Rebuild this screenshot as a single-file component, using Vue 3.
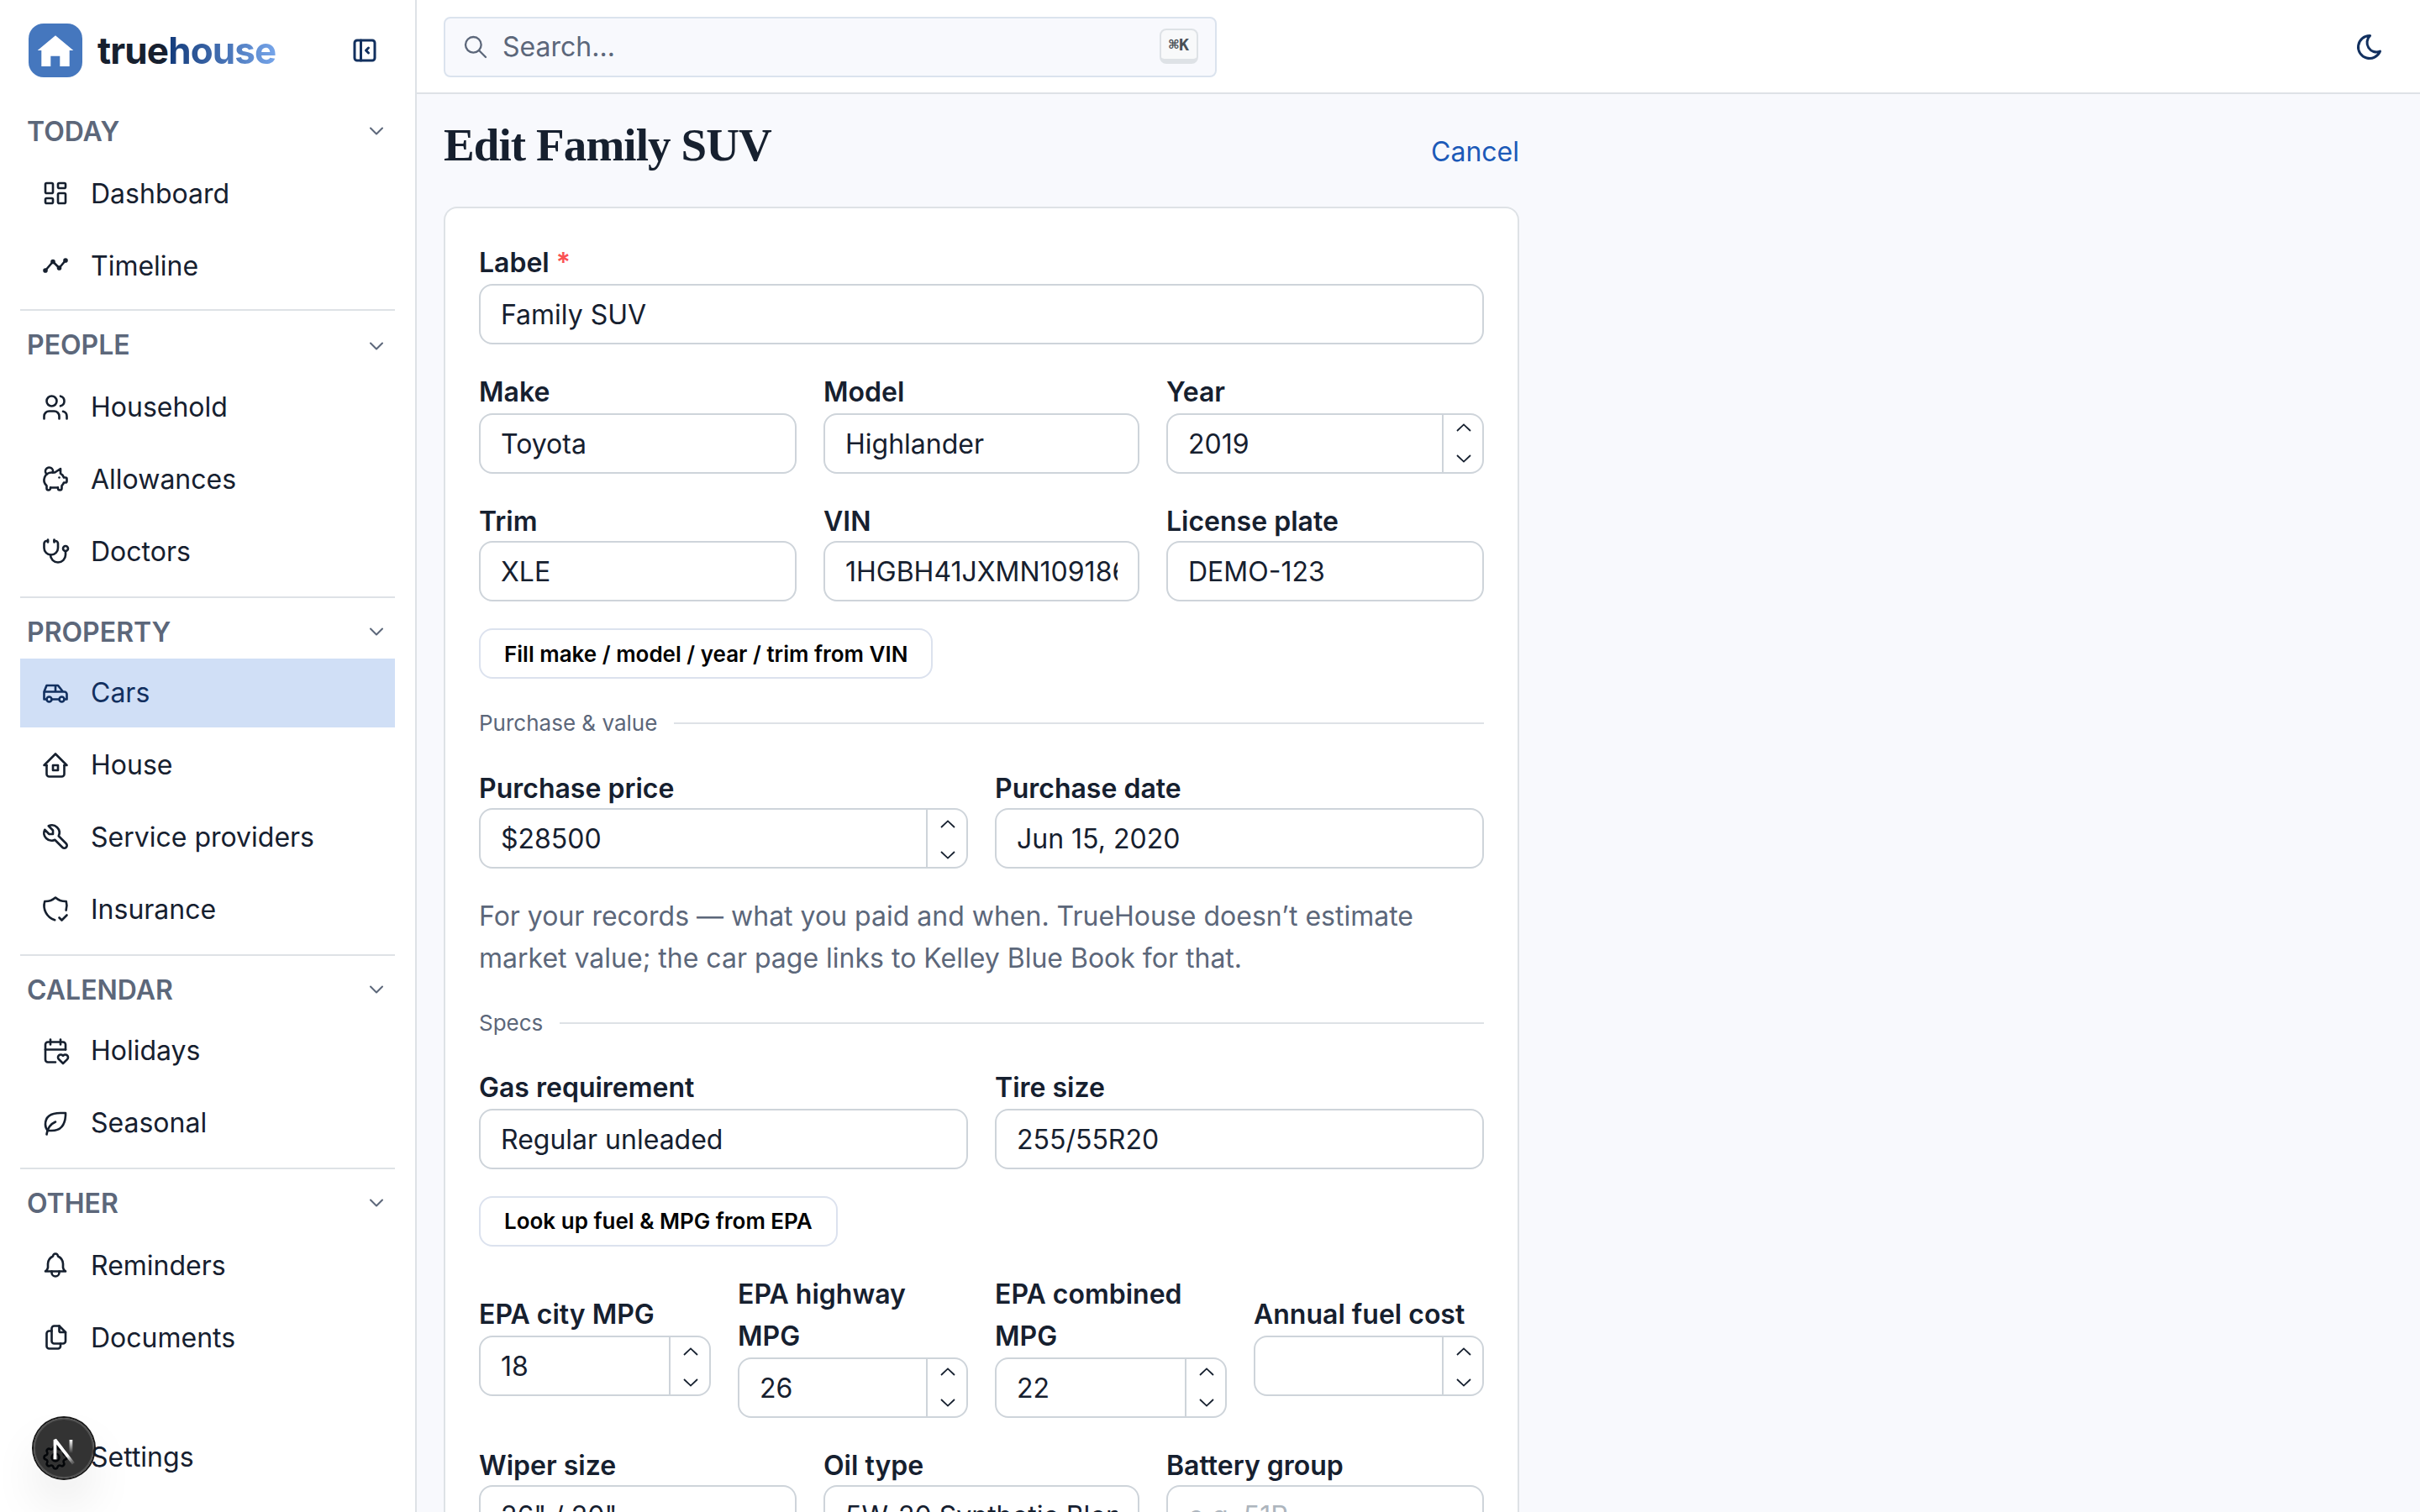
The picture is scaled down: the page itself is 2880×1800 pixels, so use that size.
<script setup>
const icons = {
  dashboard: ['M5 4h4a1 1 0 0 1 1 1v6a1 1 0 0 1 -1 1h-4a1 1 0 0 1 -1 -1v-6a1 1 0 0 1 1 -1', 'M5 16h4a1 1 0 0 1 1 1v2a1 1 0 0 1 -1 1h-4a1 1 0 0 1 -1 -1v-2a1 1 0 0 1 1 -1', 'M15 12h4a1 1 0 0 1 1 1v6a1 1 0 0 1 -1 1h-4a1 1 0 0 1 -1 -1v-6a1 1 0 0 1 1 -1', 'M15 4h4a1 1 0 0 1 1 1v2a1 1 0 0 1 -1 1h-4a1 1 0 0 1 -1 -1v-2a1 1 0 0 1 1 -1'],
  timeline: ['M4 16l6 -7l5 5l5 -6', 'M14 14a1 1 0 1 0 2 0a1 1 0 1 0 -2 0', 'M9 9a1 1 0 1 0 2 0a1 1 0 1 0 -2 0', 'M3 16a1 1 0 1 0 2 0a1 1 0 1 0 -2 0', 'M19 8a1 1 0 1 0 2 0a1 1 0 1 0 -2 0'],
  users: ['M5 7a4 4 0 1 0 8 0a4 4 0 1 0 -8 0', 'M3 21v-2a4 4 0 0 1 4 -4h4a4 4 0 0 1 4 4v2', 'M16 3.13a4 4 0 0 1 0 7.75', 'M21 21v-2a4 4 0 0 0 -3 -3.85'],
  pig: ['M15 11v.01', 'M5.173 8.378a3 3 0 1 1 4.656 -1.377', 'M16 4v3.803a6.019 6.019 0 0 1 2.658 3.197h1.341a1 1 0 0 1 1 1v2a1 1 0 0 1 -1 1h-1.342c-.336 .95 -.907 1.8 -1.658 2.473v2.027a1.5 1.5 0 0 1 -3 0v-.583a6.04 6.04 0 0 1 -1 .083h-4a6.04 6.04 0 0 1 -1 -.083v.583a1.5 1.5 0 0 1 -3 0v-2l0 -.027a6 6 0 0 1 4 -10.473h2.5l4.5 -3z'],
  stethoscope: ['M6 4h-1a2 2 0 0 0 -2 2v3.5a5.5 5.5 0 0 0 11 0v-3.5a2 2 0 0 0 -2 -2h-1', 'M8 15a6 6 0 1 0 12 0v-3', 'M11 3v2', 'M6 3v2', 'M18 10a2 2 0 1 0 4 0a2 2 0 1 0 -4 0'],
  car: ['M5 17a2 2 0 1 0 4 0a2 2 0 1 0 -4 0', 'M15 17a2 2 0 1 0 4 0a2 2 0 1 0 -4 0', 'M5 17h-2v-6l2 -5h9l4 5h1a2 2 0 0 1 2 2v4h-2m-4 0h-6m-6 -6h15m-6 0v-5'],
  home: ['M5 12l-2 0l9 -9l9 9l-2 0', 'M5 12v7a2 2 0 0 0 2 2h10a2 2 0 0 0 2 -2v-7', 'M10 12h4v4h-4z'],
  tool: ['M7 10h3v-3l-3.5 -3.5a6 6 0 0 1 8 8l6 6a2 2 0 0 1 -3 3l-6 -6a6 6 0 0 1 -8 -8l3.5 3.5'],
  shield: ['M11.46 20.846a12 12 0 0 1 -7.96 -14.846a12 12 0 0 0 8.5 -3a12 12 0 0 0 8.5 3a12 12 0 0 1 -.09 7.06', 'M15 19l2 2l4 -4'],
  calendar: ['M12 21h-6a2 2 0 0 1 -2 -2v-12a2 2 0 0 1 2 -2h12a2 2 0 0 1 2 2v4', 'M16 3v4', 'M8 3v4', 'M4 11h16', 'M18 22l3.35 -3.284a2.143 2.143 0 0 0 .005 -3.071a2.242 2.242 0 0 0 -3.129 -.006l-.224 .22l-.223 -.22a2.242 2.242 0 0 0 -3.128 -.006a2.143 2.143 0 0 0 -.006 3.071l3.355 3.296z'],
  leaf: ['M5 21c.5 -4.5 2.5 -8 7 -10', 'M9 18c6.218 0 10.5 -3.288 11 -12v-2h-4.014c-9 0 -11.986 4 -12 9c0 1 0 3 2 5h3z'],
  bell: ['M10 5a2 2 0 1 1 4 0a7 7 0 0 1 4 6v3a4 4 0 0 0 2 3h-16a4 4 0 0 0 2 -3v-3a7 7 0 0 1 4 -6', 'M9 17v1a3 3 0 0 0 6 0v-1'],
  files: ['M15 3v4a1 1 0 0 0 1 1h4', 'M18 17h-7a2 2 0 0 1 -2 -2v-10a2 2 0 0 1 2 -2h4l5 5v7a2 2 0 0 1 -2 2z', 'M16 17v2a2 2 0 0 1 -2 2h-7a2 2 0 0 1 -2 -2v-10a2 2 0 0 1 2 -2h2'],
  settings: ['M10.325 4.317c.426 -1.756 2.924 -1.756 3.35 0a1.724 1.724 0 0 0 2.573 1.066c1.543 -.94 3.31 .826 2.37 2.37a1.724 1.724 0 0 0 1.065 2.572c1.756 .426 1.756 2.924 0 3.35a1.724 1.724 0 0 0 -1.066 2.573c.94 1.543 -.826 3.31 -2.37 2.37a1.724 1.724 0 0 0 -2.572 1.065c-.426 1.756 -2.924 1.756 -3.35 0a1.724 1.724 0 0 0 -2.573 -1.066c-1.543 .94 -3.31 -.826 -2.37 -2.37a1.724 1.724 0 0 0 -1.065 -2.572c-1.756 -.426 -1.756 -2.924 0 -3.35a1.724 1.724 0 0 0 1.066 -2.573c-.94 -1.543 .826 -3.31 2.37 -2.37c1 .608 2.296 .07 2.572 -1.065z', 'M9 12a3 3 0 1 0 6 0a3 3 0 0 0 -6 0'],
}

const sections = [
  { title: 'Today', items: [{ label: 'Dashboard', icon: 'dashboard' }, { label: 'Timeline', icon: 'timeline' }] },
  { title: 'People', items: [{ label: 'Household', icon: 'users', low: true }, { label: 'Allowances', icon: 'pig' }, { label: 'Doctors', icon: 'stethoscope' }] },
  { title: 'Property', tight: true, items: [{ label: 'Cars', icon: 'car', low: true, active: true }, { label: 'House', icon: 'home', low: true }, { label: 'Service providers', icon: 'tool' }, { label: 'Insurance', icon: 'shield' }] },
  { title: 'Calendar', tight: true, items: [{ label: 'Holidays', icon: 'calendar', low: true }, { label: 'Seasonal', icon: 'leaf', low: true }] },
  { title: 'Other', items: [{ label: 'Reminders', icon: 'bell' }, { label: 'Documents', icon: 'files' }] },
]

const rows = [
  { cols: 1, fields: [{ label: 'Label', value: 'Family SUV', required: true }] },
  { cols: 3, fields: [{ label: 'Make', value: 'Toyota' }, { label: 'Model', value: 'Highlander' }, { label: 'Year', value: '2019', number: true }] },
  { cols: 3, tight: true, fields: [{ label: 'Trim', value: 'XLE' }, { label: 'VIN', value: '1HGBH41JXMN109186' }, { label: 'License plate', value: 'DEMO-123' }] },
  { button: 'Fill make / model / year / trim from VIN', low: true },
  { divider: 'Purchase & value' },
  { cols: 2, tight: true, fields: [{ label: 'Purchase price', value: '$28500', number: true, low: true }, { label: 'Purchase date', value: 'Jun 15, 2020' }] },
  { note: 'For your records — what you paid and when. TrueHouse doesn’t estimate market value; the car page links to Kelley Blue Book for that.' },
  { divider: 'Specs', tight: true },
  { cols: 2, fields: [{ label: 'Gas requirement', value: 'Regular unleaded' }, { label: 'Tire size', value: '255/55R20' }] },
  { button: 'Look up fuel & MPG from EPA' },
  {
    cols: 4,
    fields: [
      { label: 'EPA city MPG', value: '18', number: true, low: true, short: true },
      { label: 'EPA highway MPG', value: '26', number: true },
      { label: 'EPA combined MPG', value: '22', number: true },
      { label: 'Annual fuel cost', value: '', number: true, low: true, short: true },
    ],
  },
  { cols: 3, tight: true, fields: [{ label: 'Wiper size', value: '26" / 20"' }, { label: 'Oil type', value: '5W-20 Synthetic Blend' }, { label: 'Battery group', value: '', placeholder: 'e.g. 51R' }] },
]
</script>

<template>
  <div class="app">
    <aside class="sidebar">
      <div class="brand">
        <svg class="logo" viewBox="0 0 64 64">
          <rect width="64" height="64" rx="18" fill="#4577be" />
          <path d="M32 14.3L53.3 32H48.7V51H37.3V38.7H26.3V51H15.3V32H10.7Z" fill="#fff" />
        </svg>
        <span class="wordmark">true<span class="grad">house</span></span>
        <svg class="icon collapse" viewBox="0 0 24 24">
          <path d="M4 6a2 2 0 0 1 2 -2h12a2 2 0 0 1 2 2v12a2 2 0 0 1 -2 2h-12a2 2 0 0 1 -2 -2z" />
          <path d="M9 4v16" />
          <path d="M15 10l-2 2l2 2" />
        </svg>
      </div>
      <nav>
        <section v-for="s in sections" :key="s.title" class="section" :class="{ tight: s.tight }">
          <div class="section-head">
            <span>{{ s.title }}</span>
            <svg class="chev" viewBox="0 0 24 24"><path d="M6 9l6 6l6 -6" /></svg>
          </div>
          <a v-for="i in s.items" :key="i.label" class="item" :class="{ active: i.active, low: i.low }">
            <svg class="icon" viewBox="0 0 24 24"><path v-for="d in icons[i.icon]" :key="d" :d="d" /></svg>
            <span>{{ i.label }}</span>
          </a>
        </section>
      </nav>
      <a class="item settings low">
        <svg class="icon" viewBox="0 0 24 24"><path v-for="d in icons.settings" :key="d" :d="d" /></svg>
        <span>Settings</span>
      </a>
    </aside>

    <div class="page">
      <header class="topbar">
        <div class="search">
          <svg class="search-icon" viewBox="0 0 24 24"><path d="M3 10a7 7 0 1 0 14 0a7 7 0 1 0 -14 0" /><path d="M21 21l-6 -6" /></svg>
          <span class="search-text">Search...</span>
          <kbd>⌘K</kbd>
        </div>
        <svg class="icon moon" viewBox="0 0 24 24"><path d="M12 3c.132 0 .263 0 .393 0a7.5 7.5 0 0 0 7.92 12.446a9 9 0 1 1 -8.313 -12.454z" /></svg>
      </header>

      <main>
        <div class="title-row">
          <h1>Edit Family SUV</h1>
          <a class="cancel">Cancel</a>
        </div>
        <form class="card">
          <template v-for="(r, n) in rows" :key="n">
            <button v-if="r.button" type="button" class="btn" :class="{ low: r.low }">{{ r.button }}</button>
            <div v-else-if="r.divider" class="divider" :class="{ tight: r.tight }"><span>{{ r.divider }}</span></div>
            <p v-else-if="r.note" class="note">{{ r.note }}</p>
            <div v-else class="row" :class="['cols-' + r.cols, { tight: r.tight }]">
              <label v-for="f in r.fields" :key="f.label" class="field" :class="{ short: f.short }">
                <span class="label">{{ f.label }}<span v-if="f.required" class="req"> *</span></span>
                <span class="control">
                  <input type="text" :value="f.value" :placeholder="f.placeholder" />
                  <span v-if="f.number" class="spin" :class="{ low: f.low }">
                    <svg viewBox="0 0 18 10"><path d="M1 9l8 -7.6l8 7.6" /></svg>
                    <svg viewBox="0 0 18 10"><path d="M1 1l8 7.6l8 -7.6" /></svg>
                  </span>
                </span>
              </label>
            </div>
          </template>
        </form>
      </main>
    </div>

    <div class="dev-badge">
      <svg viewBox="0 0 72 72" fill="none">
        <defs>
          <linearGradient id="diag" gradientUnits="userSpaceOnUse" x1="9.95" y1="10.2" x2="14.6" y2="16"><stop stop-color="#fff" /><stop offset="0.6" stop-color="#fff" stop-opacity="0.3" /><stop offset="1" stop-color="#fff" stop-opacity="0" /></linearGradient>
          <linearGradient id="stem" gradientUnits="userSpaceOnUse" x1="11.8" y1="1" x2="11.8" y2="9"><stop stop-color="#fff" /><stop offset="1" stop-color="#fff" stop-opacity="0" /></linearGradient>
        </defs>
        <g transform="translate(20.8 24) scale(2)" stroke-width="1.86">
          <path d="M13.3 15.2L2.34 1V12.6" stroke="url(#diag)" stroke-linejoin="bevel" />
          <path d="M10.9 1h1.86v9h-1.86z" fill="url(#stem)" />
        </g>
      </svg>
    </div>
  </div>
</template>

<style>
html,
body {
  margin: 0;
  background: #f8f9fd;
}
</style>

<style scoped>
.app {
  display: flex;
  width: 2880px;
  height: 1800px;
  overflow: hidden;
  position: relative;
  background: #f8f9fd;
  color: #16202f;
  font-family: Inter, "Liberation Sans", sans-serif;
  font-size: 32px;
  line-height: 50px;
}
.app *,
.app *::before,
.app *::after {
  box-sizing: border-box;
}
.sidebar {
  width: 496px;
  flex: none;
  display: flex;
  flex-direction: column;
  padding: 28px 24px 24px;
  background: #fff;
  border-right: 2px solid #dee2e6;
}
.icon {
  width: 36px;
  height: 36px;
  flex: none;
  fill: none;
  stroke: currentColor;
  stroke-width: 1.75;
  stroke-linecap: round;
  stroke-linejoin: round;
}
.brand {
  display: flex;
  align-items: center;
  height: 64px;
  padding: 0 18px 0 10px;
}
.logo {
  width: 64px;
  height: 64px;
}
.wordmark {
  margin-left: 18px;
  font-size: 44px;
  font-weight: 700;
  letter-spacing: -0.88px;
}
.grad {
  background: linear-gradient(90deg, #123a7a, #76a5ea);
  -webkit-background-clip: text;
  background-clip: text;
  color: transparent;
}
.collapse {
  margin-left: auto;
  stroke-width: 2;
  color: #12305f;
}
nav {
  padding-top: 40px;
}
.section + .section {
  margin-top: 12px;
  border-top: 2px solid #dee2e6;
  padding-top: 16px;
}
.section:nth-child(2) {
  margin-top: 10px;
}
.section-head {
  display: flex;
  justify-content: space-between;
  height: 58px;
  padding: 0 8px;
  color: #5c677a;
  font-weight: 600;
  text-transform: uppercase;
}
.tight .section-head {
  height: 56px;
}
.chev {
  width: 28px;
  height: 28px;
  margin-top: 10px;
  fill: none;
  stroke: currentColor;
  stroke-width: 1.75;
  stroke-linecap: round;
  stroke-linejoin: round;
}
.section:nth-child(2) .chev {
  margin-top: 12px;
}
.item {
  display: flex;
  align-items: flex-start;
  height: 82px;
  padding: 16px 24px;
}
.item + .item {
  margin-top: 4px;
}
.item .icon {
  margin: 6px 24px 0 0;
}
.item.low .icon {
  margin-top: 7px;
}
.item.active {
  background: #d0dff6;
  color: #12305f;
}
.settings {
  margin-top: auto;
}
.page {
  flex: 1;
  min-width: 0;
}
.topbar {
  display: flex;
  align-items: center;
  justify-content: space-between;
  height: 112px;
  padding: 0 42px 0 32px;
  background: #fff;
  border-bottom: 2px solid #dee2e6;
}
.search {
  display: flex;
  align-items: center;
  width: 920px;
  height: 72px;
  margin-top: 2px;
  padding: 0 20px 0 20px;
  border: 2px solid #dbe3ee;
  border-radius: 8px;
  background: #f8f9fd;
  color: #5c677a;
}
.search-icon {
  width: 32px;
  height: 32px;
  fill: none;
  stroke: currentColor;
  stroke-width: 1.75;
  stroke-linecap: round;
}
.search-text {
  flex: 1;
  margin-left: 16px;
  margin-top: -1px;
}
kbd {
  width: 46px;
  height: 42px;
  margin-top: -2px;
  border: 2px solid #dee2e6;
  border-bottom-width: 6px;
  border-radius: 8px;
  background: #f8f9fa;
  color: #495057;
  font: 700 20px/34px "DejaVu Sans Mono", monospace;
  text-align: center;
}
.moon {
  stroke-width: 2;
  color: #12305f;
  margin-top: 2px;
}
main {
  width: 1344px;
  padding: 32px;
}
.title-row {
  display: flex;
  justify-content: space-between;
  height: 102px;
}
h1 {
  margin: -1px 0 0;
  font-family: "Liberation Serif", serif;
  font-size: 55px;
  font-weight: 700;
  line-height: 60px;
  letter-spacing: -0.9px;
}
.cancel {
  margin-top: 12px;
  color: #1c5ab8;
}
.card {
  display: flex;
  flex-direction: column;
  gap: 32px;
  padding: 40px;
  border: 2px solid #dee2e6;
  border-radius: 16px;
  background: #fff;
}
.row {
  display: grid;
  gap: 32px;
  align-items: center;
}
.cols-1 { grid-template-columns: 1fr; }
.cols-2 { grid-template-columns: repeat(2, minmax(0, 1fr)); }
.cols-3 { grid-template-columns: 378px 376px 378px; }
.cols-4 { grid-template-columns: 276px 274px 276px 274px; }
.field {
  display: flex;
  flex-direction: column;
}
.field.short {
  margin-bottom: 2px;
}
.label {
  font-weight: 600;
}
.tight .label {
  height: 48px;
}
.req {
  color: #fa5252;
}
.control {
  display: flex;
  height: 72px;
  border: 2px solid #ced4da;
  border-radius: 16px;
  background: #fff;
}
input {
  flex: 1;
  min-width: 0;
  margin: 0 24px;
  padding: 2px 0 0;
  border: 0;
  outline: 0;
  background: none;
  color: inherit;
  font: inherit;
}
input::placeholder {
  color: #adb5bd;
  opacity: 1;
}
.spin {
  display: flex;
  flex-direction: column;
  align-items: center;
  gap: 27px;
  width: 48px;
  padding: 10px 0 0 2px;
  border-left: 2px solid #ced4da;
}
.spin.low {
  padding-top: 12px;
}
.spin svg {
  width: 18px;
  height: 10px;
  fill: none;
  stroke: currentColor;
  stroke-width: 1.8;
}
.btn {
  align-self: flex-start;
  height: 60px;
  padding: 0 28px;
  border: 2px solid #dce2ee;
  border-radius: 16px;
  background: #fff;
  color: #000;
  font: 600 26px/50px Inter, sans-serif;
}
.btn.low {
  padding-top: 2px;
}
.divider {
  display: flex;
  align-items: center;
  height: 42px;
  color: #5c677a;
  font-size: 26px;
  line-height: 40px;
}
.divider.tight {
  height: 40px;
}
.divider::after {
  content: "";
  flex: 1;
  height: 2px;
  margin-left: 20px;
  background: #dee2e6;
}
.note {
  margin: 0;
  color: #5c677a;
}
.dev-badge {
  position: absolute;
  left: 40px;
  top: 1688px;
  width: 72px;
  height: 72px;
  border-radius: 50%;
  background: rgba(0, 0, 0, 0.8);
  box-shadow: 0 0 0 2px #171717, inset 0 0 0 2px rgba(255, 255, 255, 0.14), 0 32px 64px -16px rgba(0, 0, 0, 0.24);
}
.dev-badge svg {
  display: block;
  width: 72px;
  height: 72px;
}
</style>
